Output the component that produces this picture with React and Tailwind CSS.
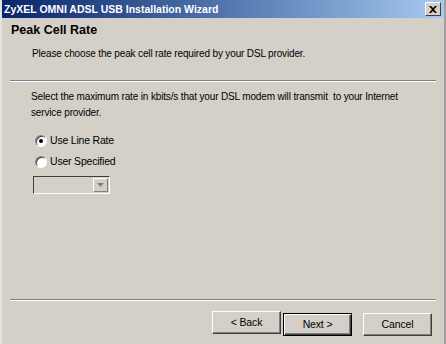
import React from "react";

function Radio({ checked }) {
  return (
    <span className="relative inline-block w-[12px] h-[12px] rounded-full bg-white border border-t-[#808080] border-l-[#808080] border-b-[#ffffff] border-r-[#ffffff] shadow-[inset_1px_1px_0_#404040]">
      {checked && (
        <span className="absolute left-[3px] top-[3px] w-[4px] h-[4px] rounded-full bg-black" />
      )}
    </span>
  );
}

function WizButton({ children, focused }) {
  return (
    <button
      className={
        "h-[23px] w-[69px] bg-[#d4d0c8] text-[10.5px] tracking-[-0.15px] text-black border " +
        (focused
          ? "border-black shadow-[inset_1px_1px_0_#ffffff,inset_-1px_-1px_0_#404040,inset_-2px_-2px_0_#808080]"
          : "border-t-white border-l-white border-b-[#404040] border-r-[#404040] shadow-[inset_-1px_-1px_0_#808080]")
      }
    >
      {children}
    </button>
  );
}

export default function App() {
  return (
    <div
      className="w-[446px] h-[344px] bg-[#d4d0c8] flex flex-col border-l-2 border-r-2 border-l-[#e6e3de] border-r-[#a0a0a0] overflow-hidden"
      style={{ fontFamily: '"Liberation Sans", Arial, sans-serif' }}
    >
      {/* Title bar */}
      <div className="h-[18px] flex items-center justify-between pl-[2px] pr-[3px] bg-gradient-to-r from-[#0a246a] to-[#a6caf0]">
        <span className="text-white font-bold text-[10.5px] leading-none">
          ZyXEL OMNI ADSL USB Installation Wizard
        </span>
        <span className="w-[16px] h-[14px] bg-[#d4d0c8] border border-t-white border-l-white border-b-[#404040] border-r-[#404040] flex items-center justify-center">
          <svg width="8" height="7" viewBox="0 0 8 7">
            <path d="M0 0h2l2 2 2-2h2L5 3.5 8 7H6L4 5 2 7H0l3-3.5z" fill="#000" />
          </svg>
        </span>
      </div>

      {/* Header */}
      <div className="pl-[9px] pt-[4px] h-[62px]">
        <div className="text-[12.5px] font-bold text-black leading-[16px]">Peak Cell Rate</div>
        <div className="pl-[21px] pt-[9px] text-[10px] tracking-[-0.15px] text-black leading-[13px]">
          Please choose the peak cell rate required by your DSL provider.
        </div>
      </div>

      <div className="mx-[8px] h-[2px] border-t border-t-[#808080] border-b border-b-white" />

      {/* Body */}
      <div className="flex-1 pl-[29px] pt-[7px] text-[10.5px] tracking-[-0.2px] text-black">
        <p className="leading-[16px] w-[390px] text-[10px] tracking-[-0.15px]">
          Select the maximum rate in kbits/s that your DSL modem will transmit&nbsp; to your Internet service provider.
        </p>
        <div className="mt-[13px] flex items-center gap-[3px] pl-[4px] h-[14px]">
          <Radio checked />
          <span>Use Line Rate</span>
        </div>
        <div className="mt-[7px] flex items-center gap-[3px] pl-[4px] h-[14px]">
          <Radio />
          <span>User Specified</span>
        </div>
        <div className="mt-[7px] ml-[2px] w-[77px] h-[18px] bg-[#d4d0c8] border border-t-[#404040] border-l-[#404040] border-b-white border-r-white flex justify-end p-[1px]">
          <span className="w-[15px] h-full bg-[#d4d0c8] border border-t-white border-l-white border-b-[#808080] border-r-[#808080] flex items-center justify-center">
            <svg width="7" height="4" viewBox="0 0 7 4">
              <path d="M0 0h7L3.5 4z" fill="#808080" />
            </svg>
          </span>
        </div>
      </div>

      <div className="mx-[8px] h-[2px] border-t border-t-[#808080] border-b border-b-white" />

      {/* Buttons */}
      <div className="h-[43px] flex items-start justify-end pr-[12px] pt-[10px]">
        <WizButton>&lt; Back</WizButton>
        <div className="ml-[2px]">
          <WizButton focused>Next &gt;</WizButton>
        </div>
        <div className="ml-[11px]">
          <WizButton>Cancel</WizButton>
        </div>
      </div>
    </div>
  );
}
